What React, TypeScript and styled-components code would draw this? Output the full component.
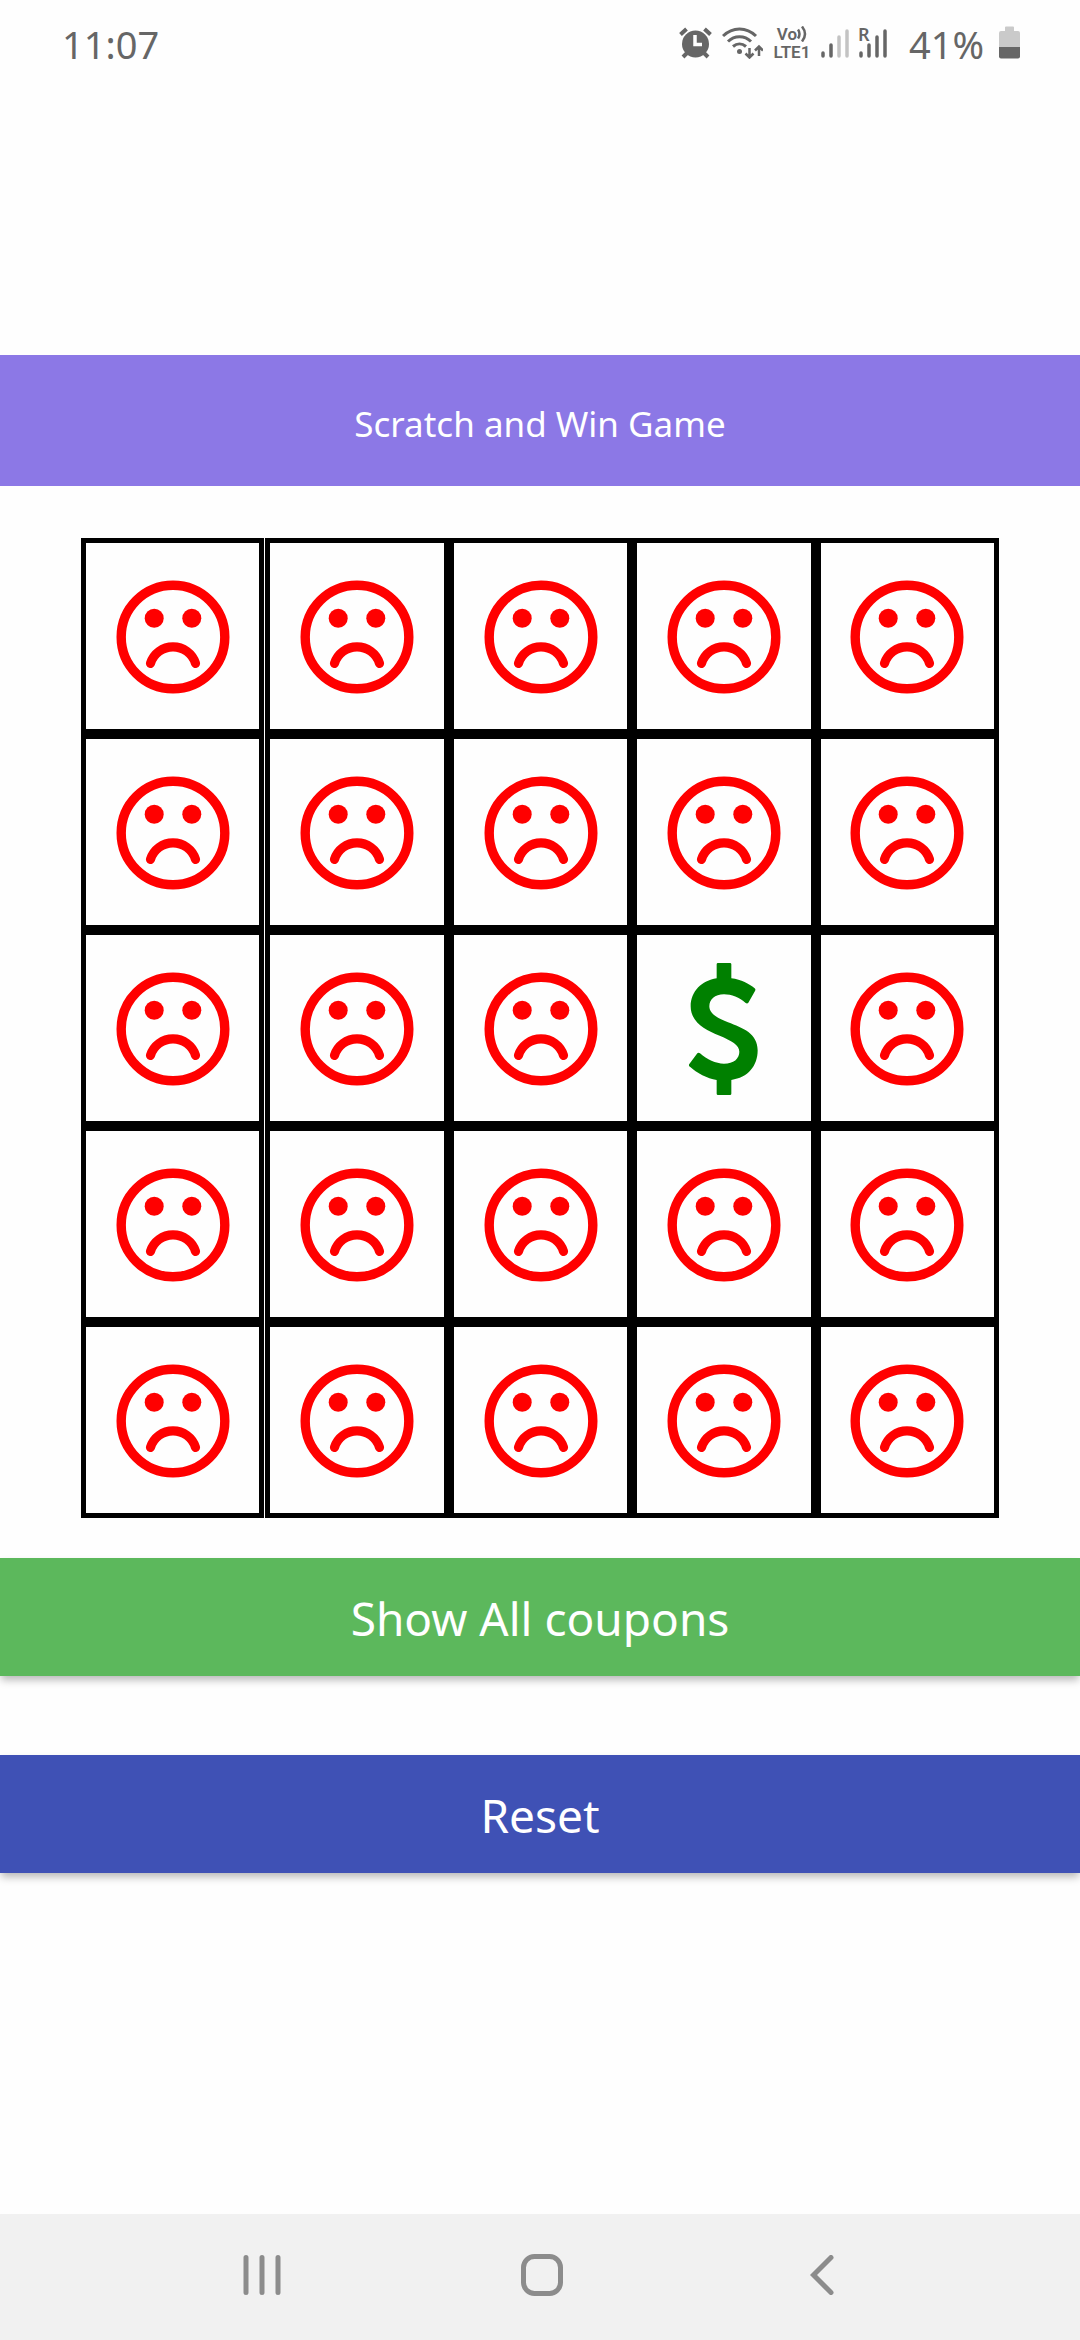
import React, { useState } from "react";
import styled, { createGlobalStyle } from "styled-components";

const GlobalStyle = createGlobalStyle`
  *, *::before, *::after { box-sizing: border-box; }
  body {
    margin: 0;
    background: #fefefe;
    font-family: "Noto Sans", "Open Sans", sans-serif;
  }
  button {
    margin: 0;
    padding: 0;
    border: 0;
    font-family: inherit;
    cursor: pointer;
  }
  svg { display: block; flex: none; }
`;

const Screen = styled.div`
  display: flex;
  flex-direction: column;
  min-height: 100vh;
`;

const StatusBar = styled.header`
  display: flex;
  align-items: center;
  justify-content: space-between;
  height: 88px;
  padding: 0 60px 3px 62px;
  color: #666;
`;

const StatusText = styled.span`
  padding-top: 2px;
  font-size: 38px;
  line-height: 52px;
`;

const StatusGroup = styled.div`
  display: flex;
  align-items: center;
  gap: 10px;
`;

const BatteryGroup = styled.div`
  display: flex;
  align-items: center;
  gap: 15px;
  padding-left: 12px;
`;

const NetworkLabel = styled.div`
  display: flex;
  flex-direction: column;
  width: 38px;
  font-family: Roboto, "Noto Sans", sans-serif;
  font-size: 17px;
  font-weight: 600;
  line-height: 18px;
`;

const NetworkLine = styled.span`
  display: flex;
  align-items: center;
  justify-content: center;
`;

const SignalBox = styled.div`
  position: relative;
`;

const RoamingBadge = styled.span`
  position: absolute;
  top: -2px;
  left: -1px;
  font-size: 18px;
  font-weight: 600;
  line-height: 18px;
`;

const Main = styled.main`
  flex: 1;
  display: flex;
  flex-direction: column;
  align-items: center;
  padding: 267px 0 80px;
`;

const Title = styled.h1`
  width: 100%;
  margin: 0 0 52px;
  padding: 43px 20px 36px;
  background: #8c78e6;
  color: #fff;
  font-size: 35px;
  font-weight: 400;
  line-height: 52px;
  text-align: center;
`;

const Board = styled.div`
  display: flex;
  flex-direction: column;
  width: 85%;
  margin-bottom: 40px;
`;

const BoardRow = styled.div`
  display: flex;
`;

const Cell = styled.button`
  flex: 1;
  display: flex;
  align-items: center;
  justify-content: center;
  height: 196px;
  padding-top: 2px;
  border: 5px solid #000;
  background: #fefefe;

  &:first-child {
    margin-right: 1px;
  }
`;

const ActionButton = styled.button<{ $color: string }>`
  width: 100%;
  padding: 30px 20px 28px;
  background: ${(p) => p.$color};
  box-shadow: 0 5px 8px -1px rgba(0, 0, 0, 0.28);
  color: #fff;
  font-size: 46px;
  line-height: 60px;

  & + & {
    margin-top: 79px;
  }
`;

const NavBar = styled.nav`
  display: grid;
  grid-template-columns: repeat(3, 26%);
  justify-content: center;
  height: 126px;
  padding-left: 4px;
  background: #f1f1f1;
`;

const NavButton = styled.button`
  display: flex;
  align-items: center;
  justify-content: center;
  padding-bottom: 4px;
  background: transparent;
  color: #8c8c8c;
`;

const AlarmIcon = () => (
  <svg width="33" height="32" viewBox="0 0 33 32" fill="none" stroke="currentColor">
    <circle cx="16.5" cy="17" r="13.5" fill="currentColor" stroke="none" />
    <path d="M1.5 7.5 7.5 2M31.5 7.5 25.500 2M4 30l5-5M29 30l-5-5" strokeWidth="4" />
    <path d="M16 8v9.500h7" stroke="#fefefe" strokeWidth="3.500" />
  </svg>
);

const WifiIcon = () => (
  <svg width="41" height="32" viewBox="0 0 41 32" fill="none" stroke="currentColor" strokeWidth="3">
    <path d="M1 9C10.500-.5 24.500-.5 34 9M6 14.500c6.500-6.500 16.500-6.500 23 0M11 19.500c4-3.500 9-3.500 13 0" />
    <circle cx="17.500" cy="24.500" r="2.500" fill="currentColor" stroke="none" />
    <path d="M27.500 21v9M23.500 26.500l4 4 4-4M37 29v-9M33 23.500l4-4 4 4" strokeWidth="2.500" />
  </svg>
);

const VoiceWaves = () => (
  <svg width="10" height="16" viewBox="0 0 10 16" fill="none" stroke="currentColor" strokeWidth="2.500">
    <path d="M1 3.500q3 4.500 0 9M5 .5q6 7.500 0 15" />
  </svg>
);

const SignalBars = ({ active }: { active: number }) => (
  <svg width="28" height="32" viewBox="0 0 28 32" stroke="currentColor" strokeWidth="3.500" strokeLinecap="round">
    {[26, 18, 10, 4].map((top, i) => (
      <path key={top} d={`M${2 + i * 8} ${top}V29`} opacity={i < active ? 1 : 0.38} />
    ))}
  </svg>
);

const BatteryIcon = () => (
  <svg width="21" height="33" viewBox="0 0 21 33">
    <path d="M6 5V1.500Q6 .5 7 .5h7q1 0 1 1V5h4q2 0 2 2v14H0V7q0-2 2-2z" fill="#cacaca" />
    <path d="M0 21h21v9.500q0 2-2 2H2q-2 0-2-2z" fill="currentColor" />
  </svg>
);

const SadIcon = () => (
  <svg width="114" height="114" viewBox="-57 -57 114 114" fill="none" stroke="red" strokeWidth="9.400">
    <circle r="51.800" />
    <circle cx="-18.800" cy="-18.800" r="9.500" fill="red" stroke="none" />
    <circle cx="18.800" cy="-18.800" r="9.500" fill="red" stroke="none" />
    <path d="M-22.500 26.300A23.600 23.600 0 0 1 22.500 26.300" strokeWidth="9.200" strokeLinecap="round" />
  </svg>
);

const DollarIcon = () => (
  <svg width="69" height="132" viewBox="208 188 207 396">
    <path
      fill="green"
      d="M291 192q0-4 4-4h36q4 0 4 4v42C365 238 388 250 405 264q4 3 1 8L386 307q-3 4-8 1C360 292 335 282 313 282C285 282 269 297 269 318C269 340 293 353 325 366C370 383 414 400 414 450C414 497 385 532 335 539v41q0 4-4 4h-36q-4 0-4-4v-41C262 535 233 519 209 498q-3-3 0-7L233 459q4-4 8 0C262 478 288 490 313 490C342 490 359 475 359 454C359 433 335 421 300 406C255 388 213 365 213 318C213 274 246 241 291 234Z"
    />
  </svg>
);

const RecentsIcon = () => (
  <svg width="38" height="40" viewBox="0 0 38 40" stroke="currentColor" strokeWidth="5" strokeLinecap="round">
    <path d="M3 2.500v35M19 2.500v35M35 2.500v35" />
  </svg>
);

const HomeIcon = () => (
  <svg width="42" height="42" viewBox="0 0 42 42" fill="none" stroke="currentColor" strokeWidth="5">
    <rect x="2.500" y="2.500" width="37" height="37" rx="11" />
  </svg>
);

const BackIcon = () => (
  <svg width="24" height="40" viewBox="0 0 24 40" fill="none" stroke="currentColor" strokeWidth="5" strokeLinecap="round">
    <path d="M21 2.500 3.500 20 21 37.500" />
  </svg>
);

const SIZE = 5;
const CELLS = SIZE * SIZE;
const all = (open: boolean) => Array<boolean>(CELLS).fill(open);

export default function App() {
  const [lucky, setLucky] = useState(13);
  const [opened, setOpened] = useState(() => all(true));

  const scratch = (index: number) =>
    setOpened((cells) => cells.map((open, i) => open || i === index));

  const reset = () => {
    setLucky(Math.floor(Math.random() * CELLS));
    setOpened(all(false));
  };

  const label = (index: number) => {
    if (!opened[index]) return `Scratch coupon ${index + 1}`;
    return index === lucky ? `Coupon ${index + 1}: win` : `Coupon ${index + 1}: no win`;
  };

  return (
    <Screen>
      <GlobalStyle />
      <StatusBar>
        <StatusText>11:07</StatusText>
        <StatusGroup>
          <AlarmIcon />
          <WifiIcon />
          <NetworkLabel>
            <NetworkLine>
              Vo
              <VoiceWaves />
            </NetworkLine>
            <NetworkLine>LTE1</NetworkLine>
          </NetworkLabel>
          <SignalBars active={2} />
          <SignalBox>
            <RoamingBadge>R</RoamingBadge>
            <SignalBars active={4} />
          </SignalBox>
          <BatteryGroup>
            <StatusText>41%</StatusText>
            <BatteryIcon />
          </BatteryGroup>
        </StatusGroup>
      </StatusBar>

      <Main>
        <Title>Scratch and Win Game</Title>
        <Board>
          {Array.from({ length: SIZE }, (_, row) => (
            <BoardRow key={row}>
              {Array.from({ length: SIZE }, (_, col) => {
                const index = row * SIZE + col;
                return (
                  <Cell key={col} type="button" aria-label={label(index)} onClick={() => scratch(index)}>
                    {opened[index] && (index === lucky ? <DollarIcon /> : <SadIcon />)}
                  </Cell>
                );
              })}
            </BoardRow>
          ))}
        </Board>
        <ActionButton type="button" $color="#5cb85c" onClick={() => setOpened(all(true))}>
          Show All coupons
        </ActionButton>
        <ActionButton type="button" $color="#3f51b5" onClick={reset}>
          Reset
        </ActionButton>
      </Main>

      <NavBar>
        <NavButton type="button" aria-label="Recent apps">
          <RecentsIcon />
        </NavButton>
        <NavButton type="button" aria-label="Home">
          <HomeIcon />
        </NavButton>
        <NavButton type="button" aria-label="Back">
          <BackIcon />
        </NavButton>
      </NavBar>
    </Screen>
  );
}
